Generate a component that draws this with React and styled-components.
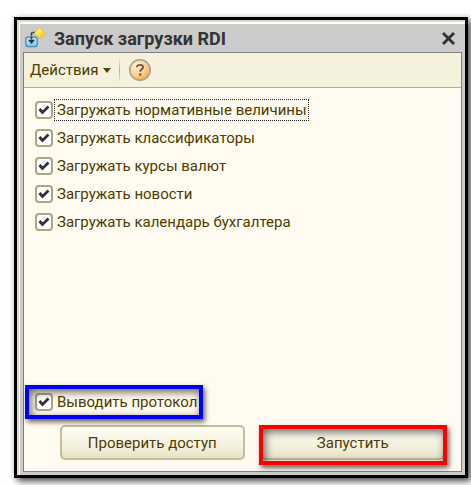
import { useState } from 'react'
import styled, { createGlobalStyle } from 'styled-components'

const loadOptions = [
  { id: 'norms', label: 'Загружать нормативные величины', focused: true },
  { id: 'classifiers', label: 'Загружать классификаторы' },
  { id: 'rates', label: 'Загружать курсы валют' },
  { id: 'news', label: 'Загружать новости' },
  { id: 'calendar', label: 'Загружать календарь бухгалтера' }
]

function LoadIcon() {
  return (
    <svg width="22" height="22" viewBox="0 0 22 22" aria-hidden="true">
      <defs>
        <linearGradient id="tray" x1="0" y1="0" x2="0" y2="1">
          <stop offset="0" stopColor="#d9f2ff" />
          <stop offset="1" stopColor="#79bfe8" />
        </linearGradient>
        <linearGradient id="gem" x1="0" y1="0" x2="1" y2="1">
          <stop offset="0" stopColor="#fff9b0" />
          <stop offset="0.5" stopColor="#ffe53b" />
          <stop offset="1" stopColor="#e8ad10" />
        </linearGradient>
      </defs>
      <rect x="1.8" y="10" width="11.4" height="9.6" rx="2.4" fill="url(#tray)" stroke="#4f8fb8" strokeWidth="1.4" />
      <path d="M11.5 5.5H7.5V13" fill="none" stroke="#333333" strokeDasharray="3 1" strokeWidth="1.6" />
      <path d="M4 12.8H11L7.5 17Z" fill="#26323c" />
      <path d="M15.8 0.6L21.4 6.2L15.8 11.8L10.2 6.2Z" fill="url(#gem)" stroke="#e0b83a" strokeWidth="0.8" />
    </svg>
  )
}

function CloseIcon() {
  return (
    <svg width="15" height="15" viewBox="0 0 15 15" aria-hidden="true">
      <path d="M3 3L12 12M12 3L3 12" stroke="#303030" strokeWidth="2.8" strokeLinecap="square" />
    </svg>
  )
}

function HelpIcon() {
  return (
    <svg width="24" height="24" viewBox="0 0 24 24" aria-hidden="true">
      <defs>
        <radialGradient id="help" cx="0.35" cy="0.3" r="0.8">
          <stop offset="0" stopColor="#fff2dc" />
          <stop offset="0.5" stopColor="#fcd39c" />
          <stop offset="1" stopColor="#f2a044" />
        </radialGradient>
      </defs>
      <circle cx="12" cy="12" r="10.3" fill="url(#help)" stroke="#a9a08f" strokeWidth="1.4" />
      <path
        d="M9 9.2C9 7.6 10.2 6.9 12 6.9C13.9 6.9 15 7.8 15 9.2C15 11.2 12.2 11.4 12.2 13.8"
        fill="none"
        stroke="#7a5238"
        strokeWidth="1.9"
      />
      <rect x="11.1" y="15.4" width="2.2" height="2.2" fill="#7a5238" />
    </svg>
  )
}

function CheckRow({ id, label, focused, checked, onChange }) {
  return (
    <CheckLine>
      <CheckBox id={id} type="checkbox" checked={checked} onChange={onChange} />
      <CheckLabel htmlFor={id} $focused={focused}>
        {label}
      </CheckLabel>
    </CheckLine>
  )
}

export default function App() {
  const [unchecked, setUnchecked] = useState([])

  function toggle(id) {
    if (unchecked.includes(id)) {
      setUnchecked(unchecked.filter(value => value !== id))
    } else {
      setUnchecked([...unchecked, id])
    }
  }

  return (
    <>
      <GlobalStyle />
      <Window>
        <Frame>
          <TitleBar>
            <LoadIcon />
            <Title>Запуск загрузки RDI</Title>
            <CloseButton aria-label="Закрыть">
              <CloseIcon />
            </CloseButton>
          </TitleBar>
          <Panel>
            <Toolbar>
              <MenuButton>
                Действия
                <svg width="8" height="5" viewBox="0 0 8 5" aria-hidden="true">
                  <path d="M0 0H8L4 5Z" fill="#5a4300" />
                </svg>
              </MenuButton>
              <Separator />
              <HelpButton aria-label="Справка">
                <HelpIcon />
              </HelpButton>
            </Toolbar>
            <Content>
              <Options>
                {loadOptions.map(option => (
                  <CheckRow
                    key={option.id}
                    {...option}
                    checked={!unchecked.includes(option.id)}
                    onChange={() => toggle(option.id)}
                  />
                ))}
              </Options>
              <Protocol $color="#0000f5">
                <CheckRow
                  id="protocol"
                  label="Выводить протокол"
                  checked={!unchecked.includes('protocol')}
                  onChange={() => toggle('protocol')}
                />
              </Protocol>
              <Actions>
                <ActionButton>Проверить доступ</ActionButton>
                <Marked $color="#fa0000">
                  <ActionButton>Запустить</ActionButton>
                </Marked>
              </Actions>
            </Content>
          </Panel>
        </Frame>
      </Window>
    </>
  )
}

const GlobalStyle = createGlobalStyle`
  * {
    box-sizing: border-box;
  }
  body {
    margin: 0;
    background-color: #ffffff;
    color: #4d3b00;
    font-family: Roboto, 'Liberation Sans', sans-serif;
    font-size: 15px;
  }
  button {
    padding: 0;
    border: none;
    background: none;
    color: inherit;
    font: inherit;
    cursor: pointer;
  }
  svg {
    display: block;
  }
`
const Window = styled.main`
  margin: 17px 3px 7px 14px;
  border: 3px solid #000000;
  background-color: #e0d8c8;
  padding: 2px 0 0 2px;
  box-shadow: 3px 3px 7px rgba(0, 0, 0, 0.75);
`
const Frame = styled.div`
  border-top: 2px solid #ffffff;
  border-left: 1px solid #ffffff;
  background-color: #cbcbcb;
  padding: 0 3px 3px 3px;
`
const TitleBar = styled.header`
  display: flex;
  align-items: center;
  gap: 8px;
  height: 28px;
  padding: 0 6px 0 1px;
`
const Title = styled.h1`
  flex: 1;
  margin: 0;
  color: #333333;
  font-size: 18px;
  font-weight: bold;
`
const CloseButton = styled.button`
  display: flex;
`
const Panel = styled.section`
  border: 1px solid #808080;
  background-color: #fffbf0;
`
const Toolbar = styled.div`
  display: flex;
  align-items: center;
  height: 35px;
  padding: 0 6px;
  border-bottom: 1px solid #b5ad85;
  background-color: #f4f1dc;
`
const MenuButton = styled.button`
  display: flex;
  align-items: center;
  gap: 5px;
`
const Separator = styled.div`
  width: 1px;
  height: 26px;
  margin: 0 8px;
  background: linear-gradient(#f4f1dc, #b5ad85, #f4f1dc);
`
const HelpButton = styled.button`
  display: flex;
`
const Content = styled.div`
  padding: 8px 16px 11px 11px;
`
const Options = styled.div`
  min-height: 292px;
`
const CheckLine = styled.div`
  display: flex;
  align-items: center;
  height: 28px;
`
const CheckBox = styled.input`
  appearance: none;
  width: 18px;
  height: 18px;
  margin: 0 1px 0 0;
  border: 2px solid #aca684;
  border-radius: 4px;
  background-color: #ffffff;

  &:checked {
    background-image: url("data:image/svg+xml,%3Csvg xmlns='http://www.w3.org/2000/svg' viewBox='0 0 14 14'%3E%3Cpath d='M2.5 6L5.5 9.5L11.5 3.5' fill='none' stroke='%23333333' stroke-width='2.8'/%3E%3C/svg%3E");
  }
`
const CheckLabel = styled.label`
  padding: 0 1px 0 2px;
  border: 1px dotted ${props => (props.$focused ? '#222222' : 'transparent')};
  line-height: 20px;
  white-space: nowrap;
`
const Marked = styled.div`
  position: relative;
  display: grid;

  &::after {
    content: '';
    position: absolute;
    inset: 0 -2px -5px;
    border: 4px solid ${props => props.$color};
    box-shadow: 2px 3px 5px rgba(0, 0, 0, 0.6), inset 2px 3px 8px rgba(0, 0, 0, 0.6);
    pointer-events: none;
  }
`
const Protocol = styled(Marked)`
  width: fit-content;
  margin-bottom: 9px;

  &::after {
    inset: -3px -4px -3px -10px;
  }
`
const Actions = styled.div`
  display: grid;
  grid-template-columns: 1fr 1fr;
  gap: 16px;
  padding-left: 25px;
`
const ActionButton = styled.button`
  height: 35px;
  border: 2px solid #c3bd98;
  border-radius: 5px;
  background: linear-gradient(#fffef5, #f1eeda 70%, #e7e2c6);
`
